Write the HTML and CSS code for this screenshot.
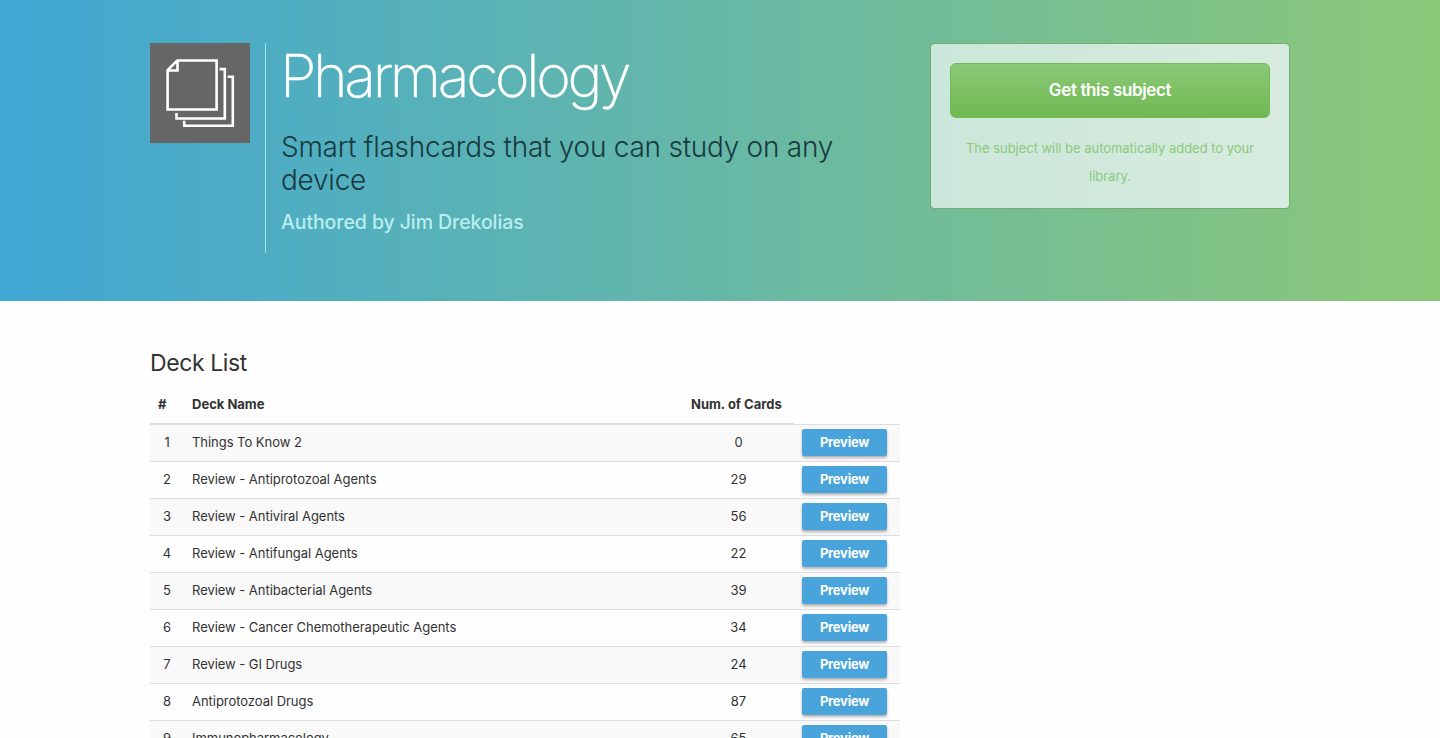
FILE: index.html
```html
<!DOCTYPE html>
<html lang="en">
<head>
<meta charset="utf-8">
<title>Pharmacology</title>
<link rel="stylesheet" href="styles.css">
</head>
<body>
<header class="hero">
  <div class="container hero-row">
    <svg class="subject-icon" viewBox="0 0 100 100" aria-hidden="true">
      <path d="M17.6 27.2 27.3 17.5H66.6V66.5H17.6ZM17.6 27.5H27.5V17.5M69.7 26.1H74.8V75.5H26.5V70M77.7 33.7H82.8V82.8H34.2V77.7"/>
    </svg>
    <div class="subject">
      <h1>Pharmacology</h1>
      <p class="tagline">Smart flashcards that you can study on any device</p>
      <p class="author">Authored by Jim Drekolias</p>
    </div>
    <aside class="get-card">
      <a class="get-button">Get this subject</a>
      <p>The subject will be automatically added to your library.</p>
    </aside>
  </div>
</header>
<main class="container">
  <h2>Deck List</h2>
  <table class="decks">
    <thead>
      <tr><th class="num">#</th><th>Deck Name</th><th class="count">Num. of Cards</th><th class="action"></th></tr>
    </thead>
    <tbody>
      <tr><td class="num">1</td><td>Things To Know 2</td><td class="count">0</td><td class="action"><a class="preview">Preview</a></td></tr>
      <tr><td class="num">2</td><td>Review - Antiprotozoal Agents</td><td class="count">29</td><td class="action"><a class="preview">Preview</a></td></tr>
      <tr><td class="num">3</td><td>Review - Antiviral Agents</td><td class="count">56</td><td class="action"><a class="preview">Preview</a></td></tr>
      <tr><td class="num">4</td><td>Review - Antifungal Agents</td><td class="count">22</td><td class="action"><a class="preview">Preview</a></td></tr>
      <tr><td class="num">5</td><td>Review - Antibacterial Agents</td><td class="count">39</td><td class="action"><a class="preview">Preview</a></td></tr>
      <tr><td class="num">6</td><td>Review - Cancer Chemotherapeutic Agents</td><td class="count">34</td><td class="action"><a class="preview">Preview</a></td></tr>
      <tr><td class="num">7</td><td>Review - GI Drugs</td><td class="count">24</td><td class="action"><a class="preview">Preview</a></td></tr>
      <tr><td class="num">8</td><td>Antiprotozoal Drugs</td><td class="count">87</td><td class="action"><a class="preview">Preview</a></td></tr>
      <tr><td class="num">9</td><td>Immunopharmacology</td><td class="count">65</td><td class="action"><a class="preview">Preview</a></td></tr>
    </tbody>
  </table>
</main>
</body>
</html>
```
FILE: styles.css
```css
* { box-sizing: border-box; }
html { overflow: hidden; }
body {
  margin: 0;
  height: 738px;
  overflow: hidden;
  background: #fefefe;
  color: #333;
  font: 13px/20px Inter, "Liberation Sans", sans-serif;
}
h1, h2, p { margin: 0; }
.container { width: 1140px; margin: 0 auto; }

.hero {
  height: 301px;
  padding-top: 43px;
  background: linear-gradient(to right, #40a7d4, #8cc878);
}
.hero-row { display: flex; align-items: flex-start; }
.subject-icon {
  flex: none;
  width: 100px;
  height: 100px;
  margin-right: 15px;
  background: #666;
  fill: none;
  stroke: #fff;
  stroke-width: 2.6;
}
.subject {
  width: 600px;
  height: 210px;
  padding-left: 15px;
  border-left: 1px solid #a0e6ee;
}
h1 {
  margin-left: -1px;
  color: #fff;
  font-size: 59px;
  font-weight: 200;
  line-height: 66px;
  letter-spacing: -3.35px;
  -webkit-text-stroke: 0.4px #fff;
}
.tagline {
  margin-top: 22px;
  color: #183a40;
  font-size: 28px;
  font-weight: 300;
  line-height: 33px;
  letter-spacing: -0.25px;
}
.author {
  margin-top: 13px;
  color: #b9edef;
  font-size: 19.5px;
  font-weight: 500;
  line-height: 24px;
  letter-spacing: -0.08px;
}
.get-card {
  width: 360px;
  height: 166px;
  margin-left: auto;
  padding: 19px;
  border: 1px solid #76ab72;
  border-radius: 4px;
  background: linear-gradient(to right, #cbe6da, #d7ecdf) padding-box;
  color: #8cc97c;
  text-align: center;
  line-height: 28px;
  letter-spacing: -0.03px;
}
.get-card p { margin-top: 16px; }
.get-button {
  display: block;
  height: 55px;
  border: 1px solid #74b956;
  border-radius: 6px;
  background: linear-gradient(#8bc878, #70b950);
  color: #fff;
  font-size: 17px;
  font-weight: 600;
  line-height: 52px;
  letter-spacing: -0.38px;
}

h2 {
  margin-top: 49px;
  font-size: 23px;
  font-weight: 400;
  line-height: 26px;
  letter-spacing: -0.4px;
}
.decks {
  width: 750px;
  margin-top: 9px;
  border-spacing: 0;
  table-layout: fixed;
}
th, td { padding: 0 8px; text-align: left; }
th {
  height: 40px;
  border-bottom: 2px solid #ddd;
  font-weight: 700;
}
th.action { border-bottom-width: 1px; }
td {
  height: 37px;
  padding-bottom: 2px;
  border-bottom: 1px solid #ddd;
  letter-spacing: -0.04px;
}
tbody tr:nth-child(odd) { background: #f9f9f9; }
.num { width: 34px; }
.count { width: 111px; text-align: center; white-space: nowrap; }
th.count { text-align: left; }
td.num { text-align: center; }
.action { width: 106px; }
td.action { padding-bottom: 1px; }
.preview {
  display: block;
  width: 85px;
  height: 27px;
  border-radius: 2px;
  background: #48a4da;
  box-shadow: 0 2px 3px rgba(0, 0, 0, 0.3);
  color: #fff;
  font-weight: 700;
  line-height: 27px;
  letter-spacing: -0.25px;
  text-align: center;
}
```
